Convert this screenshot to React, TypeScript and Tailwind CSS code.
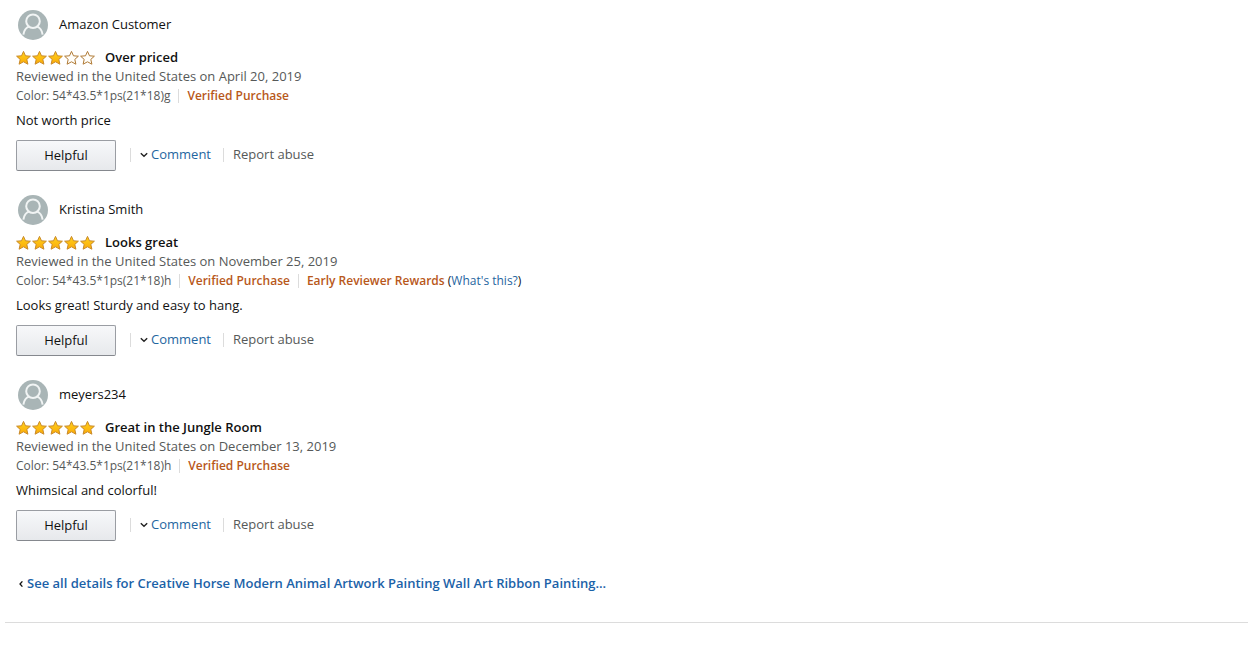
import React, { useId } from "react";

type Review = {
  name: string;
  rating: number;
  title: string;
  date: string;
  color: string;
  body: string;
  early?: boolean;
};

const reviews: Review[] = [
  { name: "Amazon Customer", rating: 3, title: "Over priced", date: "April 20, 2019", color: "54*43.5*1ps(21*18)g", body: "Not worth price" },
  { name: "Kristina Smith", rating: 5, title: "Looks great", date: "November 25, 2019", color: "54*43.5*1ps(21*18)h", body: "Looks great! Sturdy and easy to hang.", early: true },
  { name: "meyers234", rating: 5, title: "Great in the Jungle Room", date: "December 13, 2019", color: "54*43.5*1ps(21*18)h", body: "Whimsical and colorful!" },
];

function Avatar() {
  return (
    <svg viewBox="0 0 30 30" className="size-[30px] shrink-0" aria-hidden="true">
      <circle cx="15" cy="15" r="15" fill="#a9b5b6" />
      <g fill="none" stroke="#f1f4f4" strokeWidth="2">
        <circle cx="15" cy="11.2" r="6.8" />
        <path d="M5.4 24.6C6 20.4 7.8 17.6 11.4 16.4M18.6 16.4C22.2 17.6 24 20.4 24.6 24.6" />
      </g>
    </svg>
  );
}

function Stars({ rating }: { rating: number }) {
  const id = useId();
  return (
    <svg viewBox="0 0 80 16" className="h-4 w-20 shrink-0" role="img" aria-label={`${rating} out of 5 stars`}>
      <defs>
        <linearGradient id={id} x1="0" y1="0" x2="0" y2="1">
          <stop offset="0" stopColor="#ffd21c" />
          <stop offset="1" stopColor="#fbaa08" />
        </linearGradient>
      </defs>
      {[0, 1, 2, 3, 4].map((i) => (
        <path
          key={i}
          transform={`translate(${i * 16} 0)`}
          d="M7.5 1.4L9.5 5.8L14.4 6.2L10.8 9.4L11.9 14.2L7.5 11.8L3.1 14.2L4.2 9.4L0.6 6.2L5.5 5.8Z"
          fill={i < rating ? `url(#${id})` : "#fffefa"}
          stroke={i < rating ? "#c98a2a" : "#b07a35"}
          strokeWidth="1"
          strokeLinejoin="round"
        />
      ))}
    </svg>
  );
}

function Divider() {
  return <span className="h-3.5 w-px shrink-0 bg-[#dcdcdc]" />;
}

function ReviewItem({ review }: { review: Review }) {
  return (
    <article className="flex flex-col items-start">
      <a href="#profile" className="flex items-center gap-[11px] pl-0.5">
        <Avatar />
        <span className="pb-0.5">{review.name}</span>
      </a>
      <div className="mt-2 flex items-center gap-[9px]">
        <Stars rating={review.rating} />
        <h3>
          <a href="#review" className="font-semibold">{review.title}</a>
        </h3>
      </div>
      <p className="text-[#565959]">Reviewed in the United States on {review.date}</p>
      <div className="flex flex-wrap items-center gap-x-2 text-xs leading-[19px]">
        <span className="text-[#565959]">Color: {review.color}</span>
        <Divider />
        <a href="#verified" className="font-semibold text-[#b8581a]">Verified Purchase</a>
        {review.early && (
          <>
            <Divider />
            <span>
              <span className="font-semibold text-[#b8581a]">Early Reviewer Rewards</span>{" "}
              (<a href="#rewards" className="text-[#1f66a0]">What's this?</a>)
            </span>
          </>
        )}
      </div>
      <p className="mt-1.5">{review.body}</p>
      <div className="mt-2.5 flex items-center">
        <button
          type="button"
          className="h-[31px] w-[100px] rounded-[2px] border border-[#9a9da3] border-b-[#85888e] bg-linear-to-b from-[#f7f8fa] to-[#e7e9ec]"
        >
          Helpful
        </button>
        <div className="ml-3.5 flex items-center gap-[9px] pb-0.5">
          <Divider />
          <button type="button" className="flex items-center gap-[3px] pr-[3px] text-[#1f66a0]">
            <svg viewBox="0 0 8 6" className="h-1.5 w-2" aria-hidden="true">
              <path d="M0.8 1.2L4 4.2L7.2 1.2" fill="none" stroke="#222" strokeWidth="1.4" />
            </svg>
            Comment
          </button>
          <Divider />
          <a href="#report" className="text-[#565959]">Report abuse</a>
        </div>
      </div>
    </article>
  );
}

export default function App() {
  return (
    <main className="bg-white pt-2.5 font-['Open_Sans','Noto_Sans',sans-serif] text-[13px] leading-[19px] text-[#111]">
      <section className="flex flex-col gap-6 px-4">
        {reviews.map((r) => (
          <ReviewItem key={r.name} review={r} />
        ))}
      </section>
      <div className="mt-[33px] flex items-center gap-1 px-[19px]">
        <svg viewBox="0 0 4 6" className="h-1.5 w-1" aria-hidden="true">
          <path d="M3.4 0.4L1 3L3.4 5.6" fill="none" stroke="#111" strokeWidth="1.3" />
        </svg>
        <a href="#details" className="font-semibold text-[#1b62a8]">
          See all details for Creative Horse Modern Animal Artwork Painting Wall Art Ribbon Painting...
        </a>
      </div>
      <hr className="mt-[29px] ml-[5px] border-[#dcdcdc]" />
    </main>
  );
}
